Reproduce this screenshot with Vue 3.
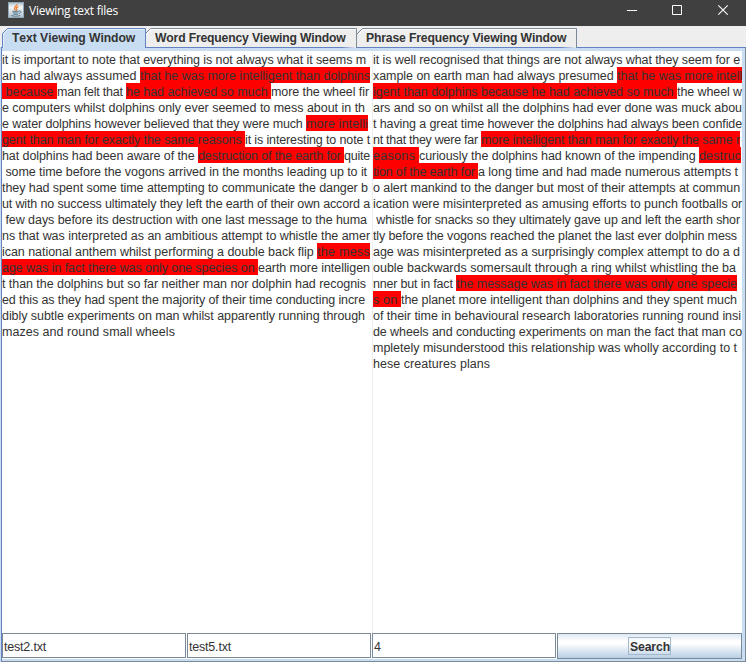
<script setup>
const ctx = document.createElement('canvas').getContext('2d')
const REGULAR = '12.5px "Liberation Sans"'
const BOLD = 'bold 12.2px "Liberation Sans"'

// Spreads a run of text over the given advance width.
function fit(text, width, font = REGULAR) {
  ctx.font = font
  const spacing = (width - ctx.measureText(text).width) / text.length
  return { width: width + 'px', letterSpacing: spacing.toFixed(4) + 'px' }
}

// Each run: [text, advance width, highlighted]
const left = [
  [['it is important to note that everything is not always what it seems m', 364]],
  [['an had always assumed ', 138], ['that he was more intelligent than dolphins', 230, 1]],
  [[' because ', 55, 1], ['man felt that ', 69], ['he had achieved so much ', 145, 1], ['more the wheel fir', 98]],
  [['e computers whilst dolphins only ever seemed to mess about in th', 363]],
  [['e water dolphins however believed that they were much ', 304], ['more intelli', 62, 1]],
  [['gent than man for exactly the same reasons ', 243, 1], ['it is interesting to note t', 125]],
  [['hat dolphins had been aware of the ', 196], ['destruction of the earth for ', 146, 1], ['quite', 26]],
  [[' some time before the vogons arrived in the months leading up to it', 365]],
  [['they had spent some time attempting to communicate the danger b', 366]],
  [['ut with no success ultimately they left the earth of their own accord a', 368]],
  [[' few days before its destruction with one last message to the huma', 365]],
  [['ns that was interpreted as an ambitious attempt to whistle the amer', 368]],
  [['ican national anthem whilst performing a double back flip ', 315], ['the mess', 53, 1]],
  [['age was in fact there was only one species on ', 256, 1], ['earth more intelligen', 112]],
  [['t than the dolphins but so far neither man nor dolphin had recognis', 364]],
  [['ed this as they had spent the majority of their time conducting incre', 363]],
  [['dibly subtle experiments on man whilst apparently running through', 363]],
  [['mazes and round small wheels', 173]]
]
const right = [
  [['it is well recognised that things are not always what they seem for e', 367]],
  [['xample on earth man had always presumed ', 244], ['that he was more intell', 125, 1]],
  [['igent than dolphins because he had achieved so much ', 304, 1], ['the wheel w', 65]],
  [['ars and so on whilst all the dolphins had ever done was muck abou', 369]],
  [['t having a great time however the dolphins had always been confide', 369]],
  [['nt that they were far ', 108], ['more intelligent than man for exactly the same r', 259, 1]],
  [['easons ', 46, 1], ['curiously the dolphins had known of the impending ', 280], ['destruc', 42, 1]],
  [['tion of the earth for ', 105, 1], ['a long time and had made numerous attempts t', 260]],
  [['o alert mankind to the danger but most of their attempts at commun', 367]],
  [['ication were misinterpreted as amusing efforts to punch footballs or', 369]],
  [[' whistle for snacks so they ultimately gave up and left the earth shor', 367]],
  [['tly before the vogons reached the planet the last ever dolphin mess', 364]],
  [['age was misinterpreted as a surprisingly complex attempt to do a d', 367]],
  [['ouble backwards somersault through a ring whilst whistling the ba', 363]],
  [['nner but in fact ', 83], ['the message was in fact there was only one specie', 281, 1]],
  [['s on ', 28, 1], ['the planet more intelligent than dolphins and they spent much', 336]],
  [['of their time in behavioural research laboratories running round insi', 368]],
  [['de wheels and conducting experiments on man the fact that man co', 369]],
  [['mpletely misunderstood this relationship was wholly according to t', 364]],
  [['hese creatures plans', 117]]
]
const panes = [left, right]

const tabs = [
  { label: 'Text Viewing Window', w: 145, text: 122, pad: 12, active: true },
  { label: 'Word Frequency Viewing Window', w: 212, text: 190, pad: 10 },
  { label: 'Phrase Frequency Viewing Window', w: 220, text: 200, pad: 9 }
]
const fields = [['test2.txt', 42], ['test5.txt', 42], ['4', 7]]
</script>

<template>
  <div class="window">
    <header class="titlebar">
      <svg class="java" width="16" height="16" viewBox="0 0 16 16">
        <defs>
          <linearGradient id="tile" x1="0" y1="0" x2="0" y2="1">
            <stop offset="0" stop-color="#a9bdc8" />
            <stop offset=".3" stop-color="#f5f7f8" />
            <stop offset="1" stop-color="#b6c3cc" />
          </linearGradient>
        </defs>
        <rect x=".5" y=".5" width="15" height="15" fill="url(#tile)" stroke="#91a8b6" />
        <path d="M9 2C9.5 4 5 4.8 6.6 7.2L7.7 8.4M10.4 4.6C7.8 5.5 8 6.3 8.8 7.2 9.2 7.8 8.6 8.4 8.2 8.7" fill="none" stroke="#ee7928" stroke-width="1.2" />
        <path d="M4.2 9.3H11M4.9 10.9H10.4M5.4 12.3H9.8M3 13.6Q7.5 15 12.3 13.6M11 9.1C14.2 8.6 13.2 11 11 11.6" fill="none" stroke="#52788f" stroke-width=".95" />
      </svg>
      <span class="title" :style="fit('Viewing text files', 89, '12px &quot;Open Sans&quot;')">Viewing text files</span>
      <svg class="controls" width="110" height="20" viewBox="0 0 110 20" fill="none" stroke="#fff">
        <path d="M2 10.5H12M47.5 5.5H56.5V14.5H47.5Z" />
        <path d="M93.3 5.3L102.7 14.7M102.7 5.3L93.3 14.7" stroke-width="1.1" />
      </svg>
    </header>

    <nav class="tabs">
      <div
        v-for="t in tabs"
        :key="t.label"
        class="tab"
        :class="{ active: t.active }"
        :style="{ width: t.w + 'px', paddingLeft: t.pad + 'px' }"
      >
        <svg class="shape" :width="t.w" height="20" :viewBox="`0 0 ${t.w} 20`">
          <path v-if="t.active" class="face" :d="`M2.5 20V5.5L7.5 .5H${t.w + 0.5}V20`" />
          <path v-else class="face" :d="`M0 6L5.5 .5H${t.w - 0.5}V20`" />
          <path v-if="t.active" class="shine" :d="`M3.5 20V6L8 1.5H${t.w - 1}`" />
          <path v-else class="shine" :d="`M1 7L6 1.5H${t.w - 1}`" />
        </svg>
        <span class="label" :style="fit(t.label, t.text, BOLD)">{{ t.label }}</span>
      </div>
    </nav>

    <main class="frame">
      <div class="panes">
        <section v-for="(lines, i) in panes" :key="i" class="pane">
          <div v-for="(line, n) in lines" :key="n" class="line">
            <span
              v-for="(run, r) in line"
              :key="r"
              class="run"
              :class="{ hit: run[2] }"
              :style="fit(run[0], run[1])"
            >{{ run[0] }}</span>
          </div>
        </section>
      </div>
      <footer class="bar">
        <div v-for="f in fields" :key="f[0]" class="field"><span :style="fit(f[0], f[1])">{{ f[0] }}</span></div>
        <button class="search"><span class="focus"><span class="word" :style="fit('Search', 40, BOLD)">Search</span></span></button>
      </footer>
    </main>
  </div>
</template>

<style>
body {
  margin: 0;
  overflow: hidden;
}
</style>

<style scoped>
.window {
  width: 746px;
  height: 662px;
  display: flex;
  flex-direction: column;
  background: #eee;
  color: #333;
  font: 12.5px "Liberation Sans", sans-serif;
  font-kerning: none;
}
.titlebar {
  height: 26px;
  flex: none;
  box-sizing: border-box;
  display: flex;
  align-items: flex-start;
  padding: 2px 11px 0 8px;
  background: #404040;
}
.java {
  flex: none;
}
.title {
  margin-left: 5px;
  color: #fff;
  font: 12px/17px "Open Sans", sans-serif;
  white-space: pre;
}
.controls {
  flex: none;
  margin-left: auto;
  margin-top: -2px;
}
.tabs {
  height: 19px;
  flex: none;
  display: flex;
  padding-top: 2px;
}
.tab {
  position: relative;
  box-sizing: border-box;
  height: 19px;
  flex: none;
}
.tab.active {
  z-index: 1;
}
.shape {
  position: absolute;
  left: 0;
  top: 0;
  overflow: visible;
}
.face {
  fill: #eee;
  stroke: #7a8a99;
}
.shine {
  fill: none;
  stroke: #fff;
}
.active .face {
  fill: #c8ddf2;
  stroke: #6382bf;
}
.active .shine {
  stroke: #e4eef8;
}
.label {
  position: relative;
  display: block;
  font-size: 12.2px;
  font-weight: bold;
  line-height: 14px;
  padding-top: 3px;
  white-space: pre;
}
.frame {
  flex: 1;
  min-height: 0;
  box-sizing: border-box;
  display: flex;
  flex-direction: column;
  border: 1px solid #7a8a99;
  border-top-color: #6382bf;
  border-left-color: #6382bf;
  box-shadow: inset 0 0 0 3px #c8ddf2, -1px 0 0 #c8ddf2;
  padding: 3px 3px 2px 0;
  margin-left: 1px;
}
.panes {
  flex: 1;
  display: grid;
  grid-template-columns: 370px 1fr;
  gap: 1px;
  background: #eee;
}
.pane {
  background: #fff;
}
.line {
  height: 16px;
  display: flex;
}
.run {
  flex: none;
  height: 16px;
  line-height: 18px;
  white-space: pre;
}
.hit {
  background: #f00;
}
.bar {
  height: 26px;
  flex: none;
  display: grid;
  grid-template-columns: 184px 184px 184px 185px;
  gap: 1px;
  background: #fff;
}
.field {
  box-sizing: border-box;
  height: 25px;
  border: 1px solid #7a8a99;
  padding-left: 1px;
  line-height: 27px;
}
.search {
  box-sizing: border-box;
  height: 26px;
  margin: 0;
  padding: 0;
  display: flex;
  align-items: center;
  justify-content: center;
  border: 1px solid #7a8a99;
  border-radius: 0;
  background: linear-gradient(#dde8f3 0%, #fff 30%, #fff 40%, #b8cfe5 100%);
  color: #333;
  font: bold 12.2px "Liberation Sans", sans-serif;
  font-kerning: none;
}
.focus {
  box-sizing: border-box;
  width: 43px;
  height: 18px;
  border: 1px solid #a3b8cc;
  padding-left: 1px;
  text-align: left;
}
.word {
  display: block;
  line-height: 18px;
  white-space: pre;
}
</style>
